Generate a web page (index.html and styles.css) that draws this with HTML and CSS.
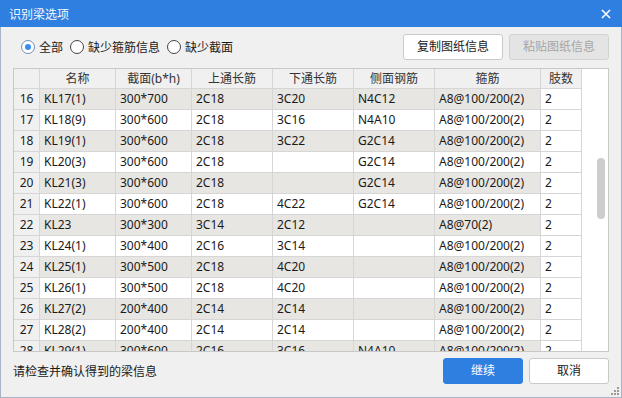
FILE: index.html
```html
<!DOCTYPE html>
<html lang="zh-CN">

<head>
    <meta charset="UTF-8">
    <title>识别梁选项</title>
    <link rel="stylesheet" href="styles.css">
</head>

<body>
    <div class="dialog">
        <div class="titlebar">
            <span class="title">识别梁选项</span>
            <svg class="close" width="10" height="10" viewBox="0 0 10 10">
                <path d="M1 1 L9 9 M9 1 L1 9" stroke="#fff" stroke-width="1.6" />
            </svg>
        </div>

        <div class="toolbar">
            <div class="radios">
                <label class="radio checked"><span class="dot"></span>全部</label>
                <label class="radio"><span class="dot"></span>缺少箍筋信息</label>
                <label class="radio"><span class="dot"></span>缺少截面</label>
            </div>
            <div class="btn">复制图纸信息</div>
            <div class="btn disabled">粘贴图纸信息</div>
        </div>

        <div class="grid-box">
            <div class="rows" id="rows">
                <div class="row head">
                    <div class="cell idx"></div>
                    <div class="cell">名称</div>
                    <div class="cell">截面(b*h)</div>
                    <div class="cell">上通长筋</div>
                    <div class="cell">下通长筋</div>
                    <div class="cell">侧面钢筋</div>
                    <div class="cell">箍筋</div>
                    <div class="cell">肢数</div>
                </div>
            </div>
            <div class="scroll">
                <div class="thumb"></div>
            </div>
        </div>

        <div class="footer">
            <span class="hint">请检查并确认得到的梁信息</span>
            <div class="btn primary">继续</div>
            <div class="btn">取消</div>
        </div>

        <svg class="grip" width="9" height="9" viewBox="0 0 9 9">
            <rect x="6" y="0" width="2" height="2" fill="#9a9a9a" />
            <rect x="3" y="3" width="2" height="2" fill="#9a9a9a" />
            <rect x="6" y="3" width="2" height="2" fill="#9a9a9a" />
            <rect x="0" y="6" width="2" height="2" fill="#9a9a9a" />
            <rect x="3" y="6" width="2" height="2" fill="#9a9a9a" />
            <rect x="6" y="6" width="2" height="2" fill="#9a9a9a" />
        </svg>
    </div>

    <script>
        const data = [
            [16, 'KL17(1)', '300*700', '2C18', '3C20', 'N4C12', 'A8@100/200(2)', '2'],
            [17, 'KL18(9)', '300*600', '2C18', '3C16', 'N4A10', 'A8@100/200(2)', '2'],
            [18, 'KL19(1)', '300*600', '2C18', '3C22', 'G2C14', 'A8@100/200(2)', '2'],
            [19, 'KL20(3)', '300*600', '2C18', '', 'G2C14', 'A8@100/200(2)', '2'],
            [20, 'KL21(3)', '300*600', '2C18', '', 'G2C14', 'A8@100/200(2)', '2'],
            [21, 'KL22(1)', '300*600', '2C18', '4C22', 'G2C14', 'A8@100/200(2)', '2'],
            [22, 'KL23', '300*300', '3C14', '2C12', '', 'A8@70(2)', '2'],
            [23, 'KL24(1)', '300*400', '2C16', '3C14', '', 'A8@100/200(2)', '2'],
            [24, 'KL25(1)', '300*500', '2C18', '4C20', '', 'A8@100/200(2)', '2'],
            [25, 'KL26(1)', '300*500', '2C18', '4C20', '', 'A8@100/200(2)', '2'],
            [26, 'KL27(2)', '200*400', '2C14', '2C14', '', 'A8@100/200(2)', '2'],
            [27, 'KL28(2)', '200*400', '2C14', '2C14', '', 'A8@100/200(2)', '2'],
            [28, 'KL29(1)', '300*600', '2C16', '3C16', 'N4A10', 'A8@100/200(2)', '2']
        ];

        const rows = document.getElementById('rows');
        data.forEach(function (r) {
            const row = document.createElement('div');
            row.className = 'row' + (r[0] % 2 === 0 ? ' alt' : '');
            r.forEach(function (v, i) {
                const c = document.createElement('div');
                c.className = 'cell' + (i === 0 ? ' idx' : '') + (i === 7 ? ' last' : '');
                c.textContent = v;
                row.appendChild(c);
            });
            rows.appendChild(row);
        });
    </script>
</body>

</html>
```

FILE: styles.css
```css
* {
    box-sizing: border-box;
}

body {
    margin: 0;
    font-family: "Noto Sans", "Noto Sans CJK SC", sans-serif;
    font-size: 12px;
    color: #1a1a1a;
}

.dialog {
    position: relative;
    width: 622px;
    height: 398px;
    background: #f0f0f0;
    border: 1px solid #a7b5c7;
    border-top: none;
    display: flex;
    flex-direction: column;
}

.titlebar {
    height: 27px;
    margin: 0 -1px;
    background: #2e7fe0;
    color: #f4f8fd;
    display: flex;
    align-items: center;
    justify-content: space-between;
    padding: 0 11px 0 9px;
    font-size: 12px;
}

.toolbar {
    display: flex;
    align-items: center;
    height: 26px;
    margin: 7px 12px 8px 12px;
}

.radios {
    display: flex;
    align-items: center;
    margin-left: 8px;
    flex: 1;
}

.radio {
    display: flex;
    align-items: center;
    gap: 4px;
    margin-right: 7px;
}

.dot {
    width: 14px;
    height: 14px;
    border: 1px solid #444;
    border-radius: 50%;
    background: #fff;
    display: flex;
    align-items: center;
    justify-content: center;
}

.radio.checked .dot {
    border-color: #6f8fb8;
}

.radio.checked .dot::after {
    content: "";
    width: 6px;
    height: 6px;
    border-radius: 50%;
    background: #3a8cf0;
}

.btn {
    width: 100px;
    height: 26px;
    line-height: 24px;
    text-align: center;
    background: #fff;
    border: 1px solid #c9c9c9;
    border-radius: 3px;
    margin-left: 6px;
}

.btn.disabled {
    background: #e4e4e4;
    border-color: #d2d2d2;
    color: #a6a6a6;
}

.grid-box {
    display: flex;
    height: 284px;
    margin: 0 12px;
    background: #fff;
    border: 1px solid #c8c8c8;
    overflow: hidden;
}

.rows {
    width: 568px;
    flex: none;
}

.row {
    display: grid;
    grid-template-columns: 26px 76px 76px 81px 81px 81px 106px 41px;
    height: 21px;
    background: #fff;
}

.row.alt {
    background: #e7e6e2;
}

.row.head {
    height: 20px;
    background: #f0f0f0;
    color: #333;
}

.cell {
    border-right: 1px solid #d6d6d6;
    border-bottom: 1px solid #d6d6d6;
    padding-left: 4px;
    line-height: 20px;
    white-space: nowrap;
    overflow: hidden;
}

.row.head .cell {
    text-align: center;
    line-height: 19px;
    padding-left: 0;
}

.cell.idx {
    background: #f0f0f0;
    text-align: center;
    padding-left: 0;
}

.cell.last {
    background: #fff;
}

.scroll {
    flex: 1;
    padding: 89px 0 0 15px;
}

.thumb {
    width: 8px;
    height: 61px;
    border-radius: 4px;
    background: #cdcdcd;
}

.footer {
    display: flex;
    align-items: center;
    margin: 6px 12px 0 12px;
    height: 26px;
}

.hint {
    flex: 1;
}

.footer .btn {
    width: 80px;
}

.footer .btn.primary {
    background: #2e7fe0;
    border-color: #2e7fe0;
    color: #fff;
}

.grip {
    position: absolute;
    right: 1px;
    bottom: 1px;
}
```
